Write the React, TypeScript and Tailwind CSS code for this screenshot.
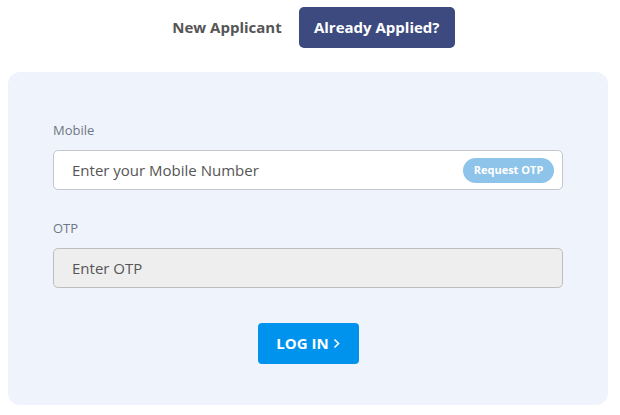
export default function App() {
  return (
    <main className="w-[620px] h-[415px] bg-white font-['Open_Sans',sans-serif] pt-[7px]">
      <div className="w-[610px] flex justify-center items-center">
        <button className="h-[40px] px-[17px] text-[15px] font-bold text-[#555555] rounded">
          New Applicant
        </button>
        <button className="h-[41px] w-[156px] text-[15px] font-bold text-white bg-[#3c4a80] rounded-[5px]">
          Already Applied?
        </button>
      </div>
      <div className="ml-[8px] w-[600px] mt-[24px] h-[333px] bg-[#eff4fc] rounded-[12px] px-[45px] pt-[49px]">
        <label className="block text-[13px] leading-[18px] text-[#6f7785]">Mobile</label>
        <div className="mt-[11px] h-[40px] flex items-center bg-white border border-[#c2c6cf] rounded-[5px] pl-[18px] pr-[8px]">
          <span className="flex-1 text-[15px] text-[#555555]">Enter your Mobile Number</span>
          <span className="h-[25px] w-[91px] flex items-center justify-center rounded-full bg-[#8ec3ea] text-white text-[11px] font-bold">
            Request OTP
          </span>
        </div>
        <label className="block mt-[29px] text-[13px] leading-[18px] text-[#6f7785]">OTP</label>
        <div className="mt-[11px] h-[40px] flex items-center bg-[#eeeeee] border border-[#bdbdbd] rounded-[5px] pl-[18px]">
          <span className="text-[15px] text-[#555555]">Enter OTP</span>
        </div>
        <div className="flex justify-center mt-[35px]">
          <button className="h-[41px] w-[101px] flex items-center justify-center gap-[4px] bg-[#0093ee] text-white text-[15px] font-bold rounded-[4px]">
            LOG IN
            <svg width="7" height="11" viewBox="0 0 7 11" fill="none" stroke="white" strokeWidth="1.6">
              <path d="M1.5 1.5 L5.5 5.5 L1.5 9.5" />
            </svg>
          </button>
        </div>
      </div>
    </main>
  )
}
